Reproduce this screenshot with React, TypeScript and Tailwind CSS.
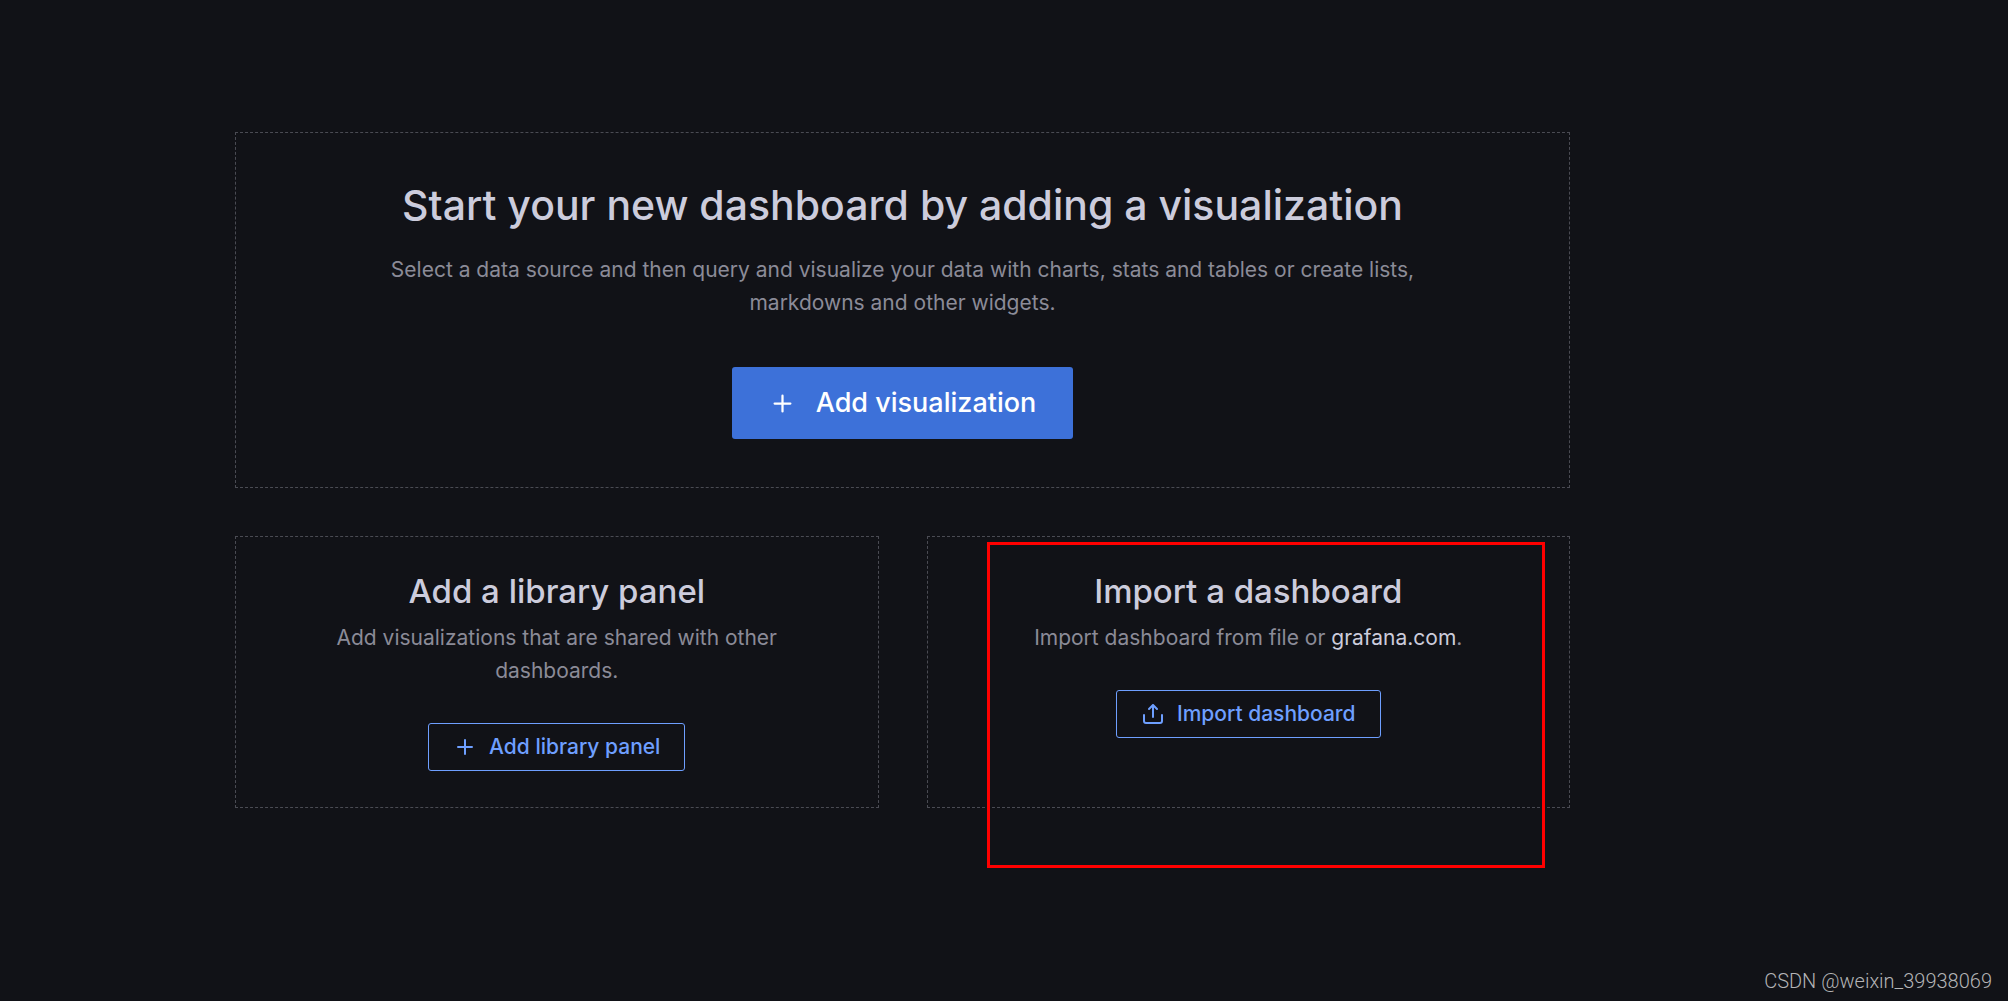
import type { ReactNode } from "react";

const ICONS = {
  plus: "M19,11H13V5a1,1,0,0,0-2,0v6H5a1,1,0,0,0,0,2h6v6a1,1,0,0,0,2,0V13h6a1,1,0,0,0,0-2Z",
  upload:
    "M8.71,7.71,11,5.41V15a1,1,0,0,0,2,0V5.41l2.29,2.3a1,1,0,0,0,1.42,0,1,1,0,0,0,0-1.42l-4-4a1,1,0,0,0-.33-.21,1,1,0,0,0-.76,0,1,1,0,0,0-.33.21l-4,4A1,1,0,1,0,8.71,7.71ZM21,12a1,1,0,0,0-1,1v6a1,1,0,0,1-1,1H5a1,1,0,0,1-1-1V13a1,1,0,0,0-2,0v6a3,3,0,0,0,3,3H19a3,3,0,0,0,3-3V13A1,1,0,0,0,21,12Z",
};

function Icon({ name, className }: { name: keyof typeof ICONS; className: string }) {
  return (
    <svg viewBox="0 0 24 24" fill="currentColor" aria-hidden="true" className={className}>
      <path d={ICONS[name]} />
    </svg>
  );
}

function OutlineButton({ icon, children }: { icon: keyof typeof ICONS; children: ReactNode }) {
  return (
    <button
      type="button"
      className="mt-9 flex h-12 items-center gap-3 rounded-[3px] border border-[#6e9fff] px-6 text-[21px] font-medium text-[#6e9fff] hover:bg-[#6e9fff]/10"
    >
      <Icon name={icon} className="size-6" />
      {children}
    </button>
  );
}

function SmallCard({ title, text, children }: { title: string; text: ReactNode; children: ReactNode }) {
  return (
    <section className="relative flex flex-col items-center border border-dashed border-[#4a4b53] px-12 py-9 text-center">
      <h3 className="text-[33px] leading-9 font-medium text-[#ccccdc]">{title}</h3>
      <p className="mt-3 text-[21px] leading-[33px] text-[#8b8b97]">{text}</p>
      {children}
    </section>
  );
}

export default function App() {
  return (
    <div className="flex min-h-screen flex-col bg-[#111217] font-['Inter',sans-serif]">
      <main className="flex grow flex-col gap-12 pt-[132px] pr-[438px] pl-[235px]">
        <section className="flex flex-col items-center border border-dashed border-[#4a4b53] px-24 py-12 text-center">
          <h1 className="text-[41px] leading-12 font-medium text-[#ccccdc]">
            Start your new dashboard by adding a visualization
          </h1>
          <p className="mt-6 text-[21px] leading-[33px] text-[#8b8b97]">
            Select a data source and then query and visualize your data with charts, stats and tables or create lists,
            markdowns and other widgets.
          </p>
          <button
            type="button"
            className="mt-12 flex h-[72px] items-center gap-5 rounded-[3px] bg-[#3d71d9] px-[37px] text-[27px] font-medium text-white hover:bg-[#5a8bea]"
          >
            <Icon name="plus" className="size-[27px]" />
            Add visualization
          </button>
        </section>

        <div className="grid grid-cols-2 gap-12">
          <SmallCard title="Add a library panel" text="Add visualizations that are shared with other dashboards.">
            <OutlineButton icon="plus">Add library panel</OutlineButton>
          </SmallCard>

          <SmallCard
            title="Import a dashboard"
            text={
              <>
                Import dashboard from file or{" "}
                <a href="#grafana" className="text-[#ccccdc] hover:underline">grafana.com</a>.
              </>
            }
          >
            <OutlineButton icon="upload">Import dashboard</OutlineButton>
            {/* Highlight frame, hangs over the card's bottom edge */}
            <div className="pointer-events-none absolute top-[5px] right-6 -bottom-[61px] left-[59px] border-[3px] border-[#ff0000]" />
          </SmallCard>
        </div>
      </main>

      <footer className="px-4 pb-2 text-right font-['Roboto',sans-serif] text-[20px] leading-6 font-light text-[#b4b4b6]">
        CSDN @weixin_39938069
      </footer>
    </div>
  );
}
